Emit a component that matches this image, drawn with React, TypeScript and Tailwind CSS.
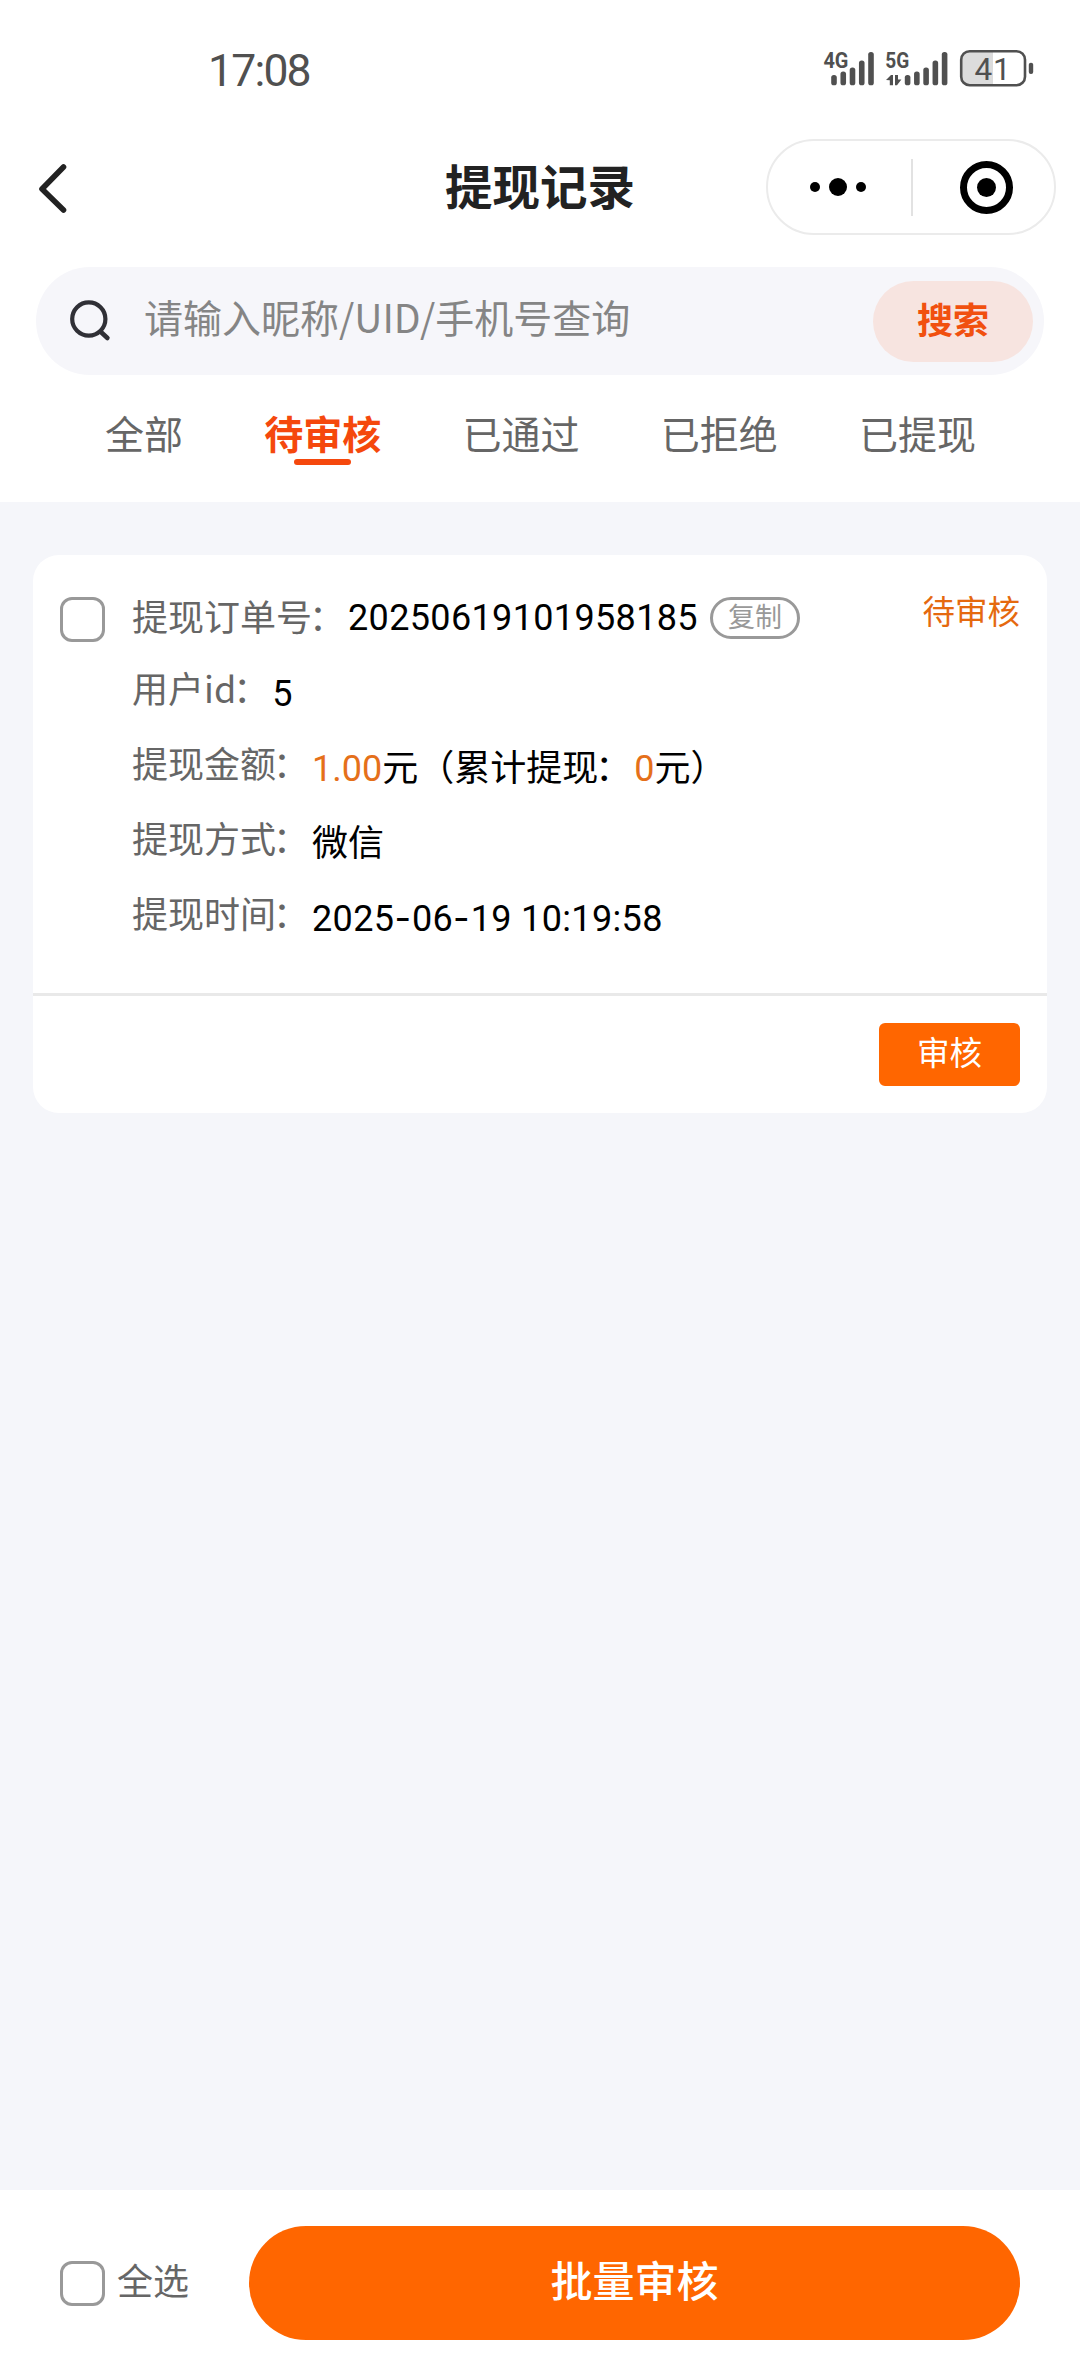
import React from "react";

const TABS = ["全部", "待审核", "已通过", "已拒绝", "已提现"];
const ACTIVE_TAB = 1;

const CELLULAR_TOPS = [75, 71.5, 67.5, 60.5, 52];

function SignalBars({ left }: { left: number }) {
  return (
    <g>
      {CELLULAR_TOPS.map((top, i) => (
        <rect key={top} x={left + i * 9.25} y={top - 50} width={5.6} height={85.3 - top} rx={2.6} />
      ))}
    </g>
  );
}

function StatusBar() {
  return (
    <div className="flex h-[139px] items-start justify-between pl-[208px] pr-[44px] font-['Roboto',sans-serif] text-[#505050]">
      <span className="mt-[43px] text-[44.5px] leading-[56px] tracking-[-1.8px]">17:08</span>
      <svg className="mt-[35px]" width="214" height="70" viewBox="0 -15 214 70" fill="currentColor">
        <text x="1.4" y="18" fontSize="22.5" fontWeight="700" textLength="25" lengthAdjust="spacingAndGlyphs">
          4G
        </text>
        <SignalBars left={9.2} />
        <text x="63.2" y="18" fontSize="22.5" fontWeight="700" textLength="24" lengthAdjust="spacingAndGlyphs">
          5G
        </text>
        <path d="M64 30 L69 25 H71 V35.2 H67.8 V30.2 Z M73 25 H76 V29.6 H79.4 L75 35.2 H73 Z" />
        <SignalBars left={82.8} />
        <path d="M147 1.5 H171 V35.5 H147 Q139.5 35.5 139.5 28 V9 Q139.5 1.5 147 1.5 Z" fill="#dcdcdc" />
        <rect x="139.2" y="1.2" width="63.8" height="34" rx="8.5" fill="none" stroke="currentColor" strokeWidth="2.6" />
        <rect x="206.8" y="12.7" width="4.4" height="11.2" rx="2" />
        <text x="152.6" y="29.6" fontSize="31.5" fontWeight="400" textLength="36" lengthAdjust="spacing">
          41
        </text>
      </svg>
    </div>
  );
}

function NavBar() {
  return (
    <div className="grid h-24 grid-cols-[1fr_auto_1fr] items-center px-6">
      <svg className="ml-3" width="34" height="56" viewBox="0 0 34 56" fill="none" stroke="#222" strokeWidth="5.6" strokeLinecap="round" strokeLinejoin="round">
        <path d="M27.5 8 L6 30 L27.5 51" />
      </svg>
      <h1 className="-mt-1 text-[47.5px] font-bold leading-[60px] text-[#222]">提现记录</h1>
      <div className="flex h-24 w-[290px] items-center justify-self-end rounded-full border-2 border-[#ebebeb] bg-white">
        <svg width="143" height="60" viewBox="0 0 143 60" fill="#000">
          <circle cx="47" cy="30" r="5" />
          <circle cx="70" cy="30" r="9" />
          <circle cx="93" cy="30" r="5" />
        </svg>
        <div className="h-[57px] w-[2px] bg-[#e2e2e2]" />
        <svg width="141" height="60" viewBox="0 0 141 60">
          <circle cx="73.5" cy="30.5" r="23" fill="none" stroke="#000" strokeWidth="7" />
          <circle cx="73.5" cy="30.5" r="9.5" />
        </svg>
      </div>
    </div>
  );
}

function SearchBar() {
  return (
    <div className="mx-9 mt-8 flex h-[108px] items-center rounded-full bg-[#f6f6fa] pl-[34px] pr-[11px]">
      <svg width="42" height="42" viewBox="0 0 42 42" fill="none" stroke="#303036" strokeLinecap="round">
        <circle cx="18.8" cy="19" r="16.6" strokeWidth="4.2" />
        <path d="M31.2 32.2 L37.4 38" strokeWidth="4.6" />
      </svg>
      <span className="-mt-[11px] ml-8 flex-1 text-[39px] leading-[56px] text-[#858585]">请输入昵称/UID/手机号查询</span>
      <button className="flex h-[81px] w-40 items-center justify-center rounded-full bg-[#f7e4e0] text-[36px] font-bold leading-[56px] text-[#f1500f]">
        <span className="-mt-[6px]">搜索</span>
      </button>
    </div>
  );
}

function Tabs() {
  return (
    <div className="flex justify-between pb-[37px] pl-[105px] pr-[104px] pt-[29px]">
      {TABS.map((tab, i) => (
        <div key={tab} className="flex flex-col items-center">
          <span className={i === ACTIVE_TAB ? "text-[39px] font-bold leading-[56px] text-[#f5480d]" : "text-[39px] leading-[56px] text-[#666]"}>
            {tab}
          </span>
          {i === ACTIVE_TAB && <div className="-mt-px h-[6px] w-[57px] rounded-full bg-[#f5480d]" />}
        </div>
      ))}
    </div>
  );
}

function Checkbox() {
  return <div className="size-[45px] shrink-0 rounded-[12px] border-[3px] border-[#999] bg-white" />;
}

function Num({ children, accent = false }: { children: React.ReactNode; accent?: boolean }) {
  return (
    <span className={accent ? "font-['Roboto',sans-serif] leading-none text-[#e5701a]" : "font-['Roboto',sans-serif] leading-none tracking-[0.35px]"}>
      {children}
    </span>
  );
}

function Dash() {
  return <span className="font-['Inter',sans-serif] tracking-[1px]">-</span>;
}

function Colon() {
  return <span className="-ml-[3px] mr-[3px]">：</span>;
}

function Label({ children }: { children: React.ReactNode }) {
  return (
    <span className="text-[#666]">
      {children}
      <Colon />
    </span>
  );
}

function Field({ label, children }: { label: string; children: React.ReactNode }) {
  return (
    <div className="flex h-[75px] items-start text-[36px] leading-[52px]">
      <Label>{label}</Label>
      <span className="mt-[3px] text-black">{children}</span>
    </div>
  );
}

function OrderCard() {
  return (
    <div className="mx-[33px] mt-[53px] rounded-[26px] bg-white">
      <div className="flex h-[438px] items-start px-[27px] pt-[42px]">
        <Checkbox />
        <div className="-mt-[8px] ml-[27px] flex-1">
          <div className="flex h-[72px] items-start text-[36px] leading-[52px]">
            <Label>提现订单号</Label>
            <span className="-mt-px text-black">
              <Num>20250619101958185</Num>
            </span>
            <span className="ml-3 mt-2 flex h-[42px] w-[90px] items-center justify-center rounded-full border-[3px] border-[#999] text-[27px] leading-[36px] text-[#999]">
              <span className="-mt-1">复制</span>
            </span>
          </div>
          <Field label="用户id">
            <Num>5</Num>
          </Field>
          <Field label="提现金额">
            <Num accent>1.00</Num>元（累计提现
            <Colon />
            <Num accent>0</Num>元）
          </Field>
          <Field label="提现方式">微信</Field>
          <Field label="提现时间">
            <Num>
              2025
              <Dash />
              06
              <Dash />
              19 10:19:58
            </Num>
          </Field>
        </div>
        <span className="-mt-[11px] text-[32.5px] leading-[48px] text-[#e5690f]">待审核</span>
      </div>
      <div className="h-[3px] bg-[#e9e9e9]" />
      <div className="flex h-[117px] items-center justify-end pr-[27px]">
        <button className="flex h-[63px] w-[141px] items-center justify-center rounded-[6px] bg-[#ff6600] text-[32.5px] leading-[48px] text-white">
          <span className="-mt-[7px]">审核</span>
        </button>
      </div>
    </div>
  );
}

function BottomBar() {
  return (
    <div className="flex h-[186px] items-center bg-white pl-[60px] pr-[60px]">
      <Checkbox />
      <span className="-mt-[8px] ml-[12px] w-[132px] text-[36px] leading-[52px] text-[#666]">全选</span>
      <button className="flex h-[114px] flex-1 items-center justify-center rounded-full bg-[#ff6600] text-[42px] font-medium leading-[60px] text-white">
        <span className="-mt-[9px]">批量审核</span>
      </button>
    </div>
  );
}

export default function App() {
  return (
    <div className="flex h-[2376px] w-[1080px] flex-col overflow-hidden bg-[#f5f6fa] font-['Noto_Sans_CJK_SC',sans-serif]">
      <header className="h-[502px] bg-white">
        <StatusBar />
        <NavBar />
        <SearchBar />
        <Tabs />
      </header>
      <main className="flex-1">
        <OrderCard />
      </main>
      <BottomBar />
    </div>
  );
}
